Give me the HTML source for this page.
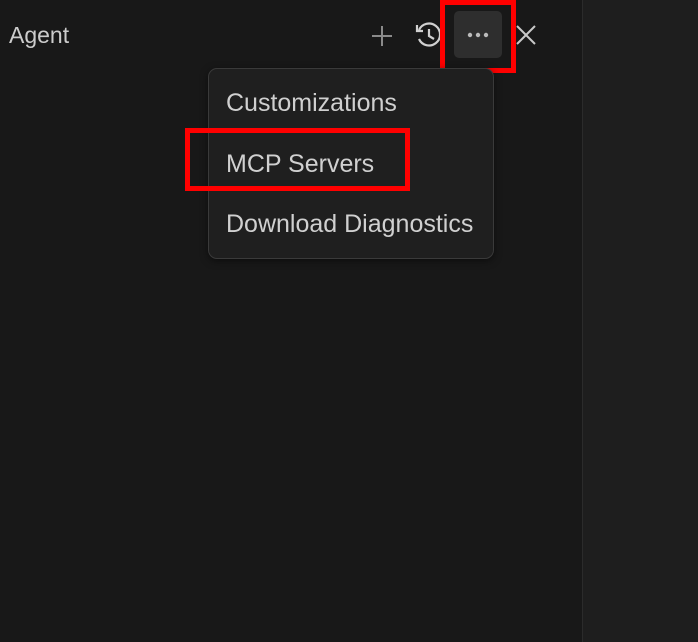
<!DOCTYPE html>
<html><head><style>
body{margin:0;width:698px;height:642px;background:#181818;position:relative;overflow:hidden;font-family:"Liberation Sans",Arial,sans-serif;color:#d4d4d4}
.right{position:absolute;left:582px;top:0;width:116px;height:642px;background:#1e1e1e;border-left:1px solid #2b2b2b}
.agent{position:absolute;left:9px;top:22px;font-size:23px;color:#cccccc}
.menu{position:absolute;left:208px;top:68px;width:284px;height:189px;background:#1f1f1f;border:1px solid #3a3a3a;border-radius:9px;box-shadow:0 2px 8px rgba(0,0,0,.5)}
.item{position:absolute;left:17px;font-size:25px;color:#d0d0d0}
.red{position:absolute;border:5px solid #ff0000;box-sizing:border-box}
.btn{position:absolute;left:454px;top:11px;width:48px;height:47px;background:#2e2e2e;border-radius:5px}
</style></head><body>
<div class="right"></div>
<div class="agent">Agent</div>
<svg style="position:absolute;left:370px;top:24px" width="24" height="24"><path d="M12 2V22M2 12H22" stroke="#8a8a8a" stroke-width="2"/></svg>
<svg style="position:absolute;left:414px;top:20px" width="30" height="30" fill="none" stroke="#d0d0d0" stroke-width="2.2"><path d="M5 10A11 11 0 1 1 5 19"/><path d="M3 5V11H9"/><path d="M15 9V16L20 19"/></svg>
<div class="btn"></div>
<svg style="position:absolute;left:466px;top:31px" width="24" height="8"><circle cx="4" cy="4" r="2.2" fill="#bbb"/><circle cx="12" cy="4" r="2.2" fill="#bbb"/><circle cx="20" cy="4" r="2.2" fill="#bbb"/></svg>
<svg style="position:absolute;left:515px;top:24px" width="22" height="22"><path d="M2 2L20 20M20 2L2 20" stroke="#c8c8c8" stroke-width="2"/></svg>
<div class="red" style="left:440px;top:0;width:76px;height:73px"></div>
<div class="menu">
<div class="item" style="top:20px">Customizations</div>
<div class="item" style="top:81px">MCP Servers</div>
<div class="item" style="top:141px">Download Diagnostics</div>
</div>
<div class="red" style="left:185px;top:128px;width:225px;height:63px"></div>
</body></html>
